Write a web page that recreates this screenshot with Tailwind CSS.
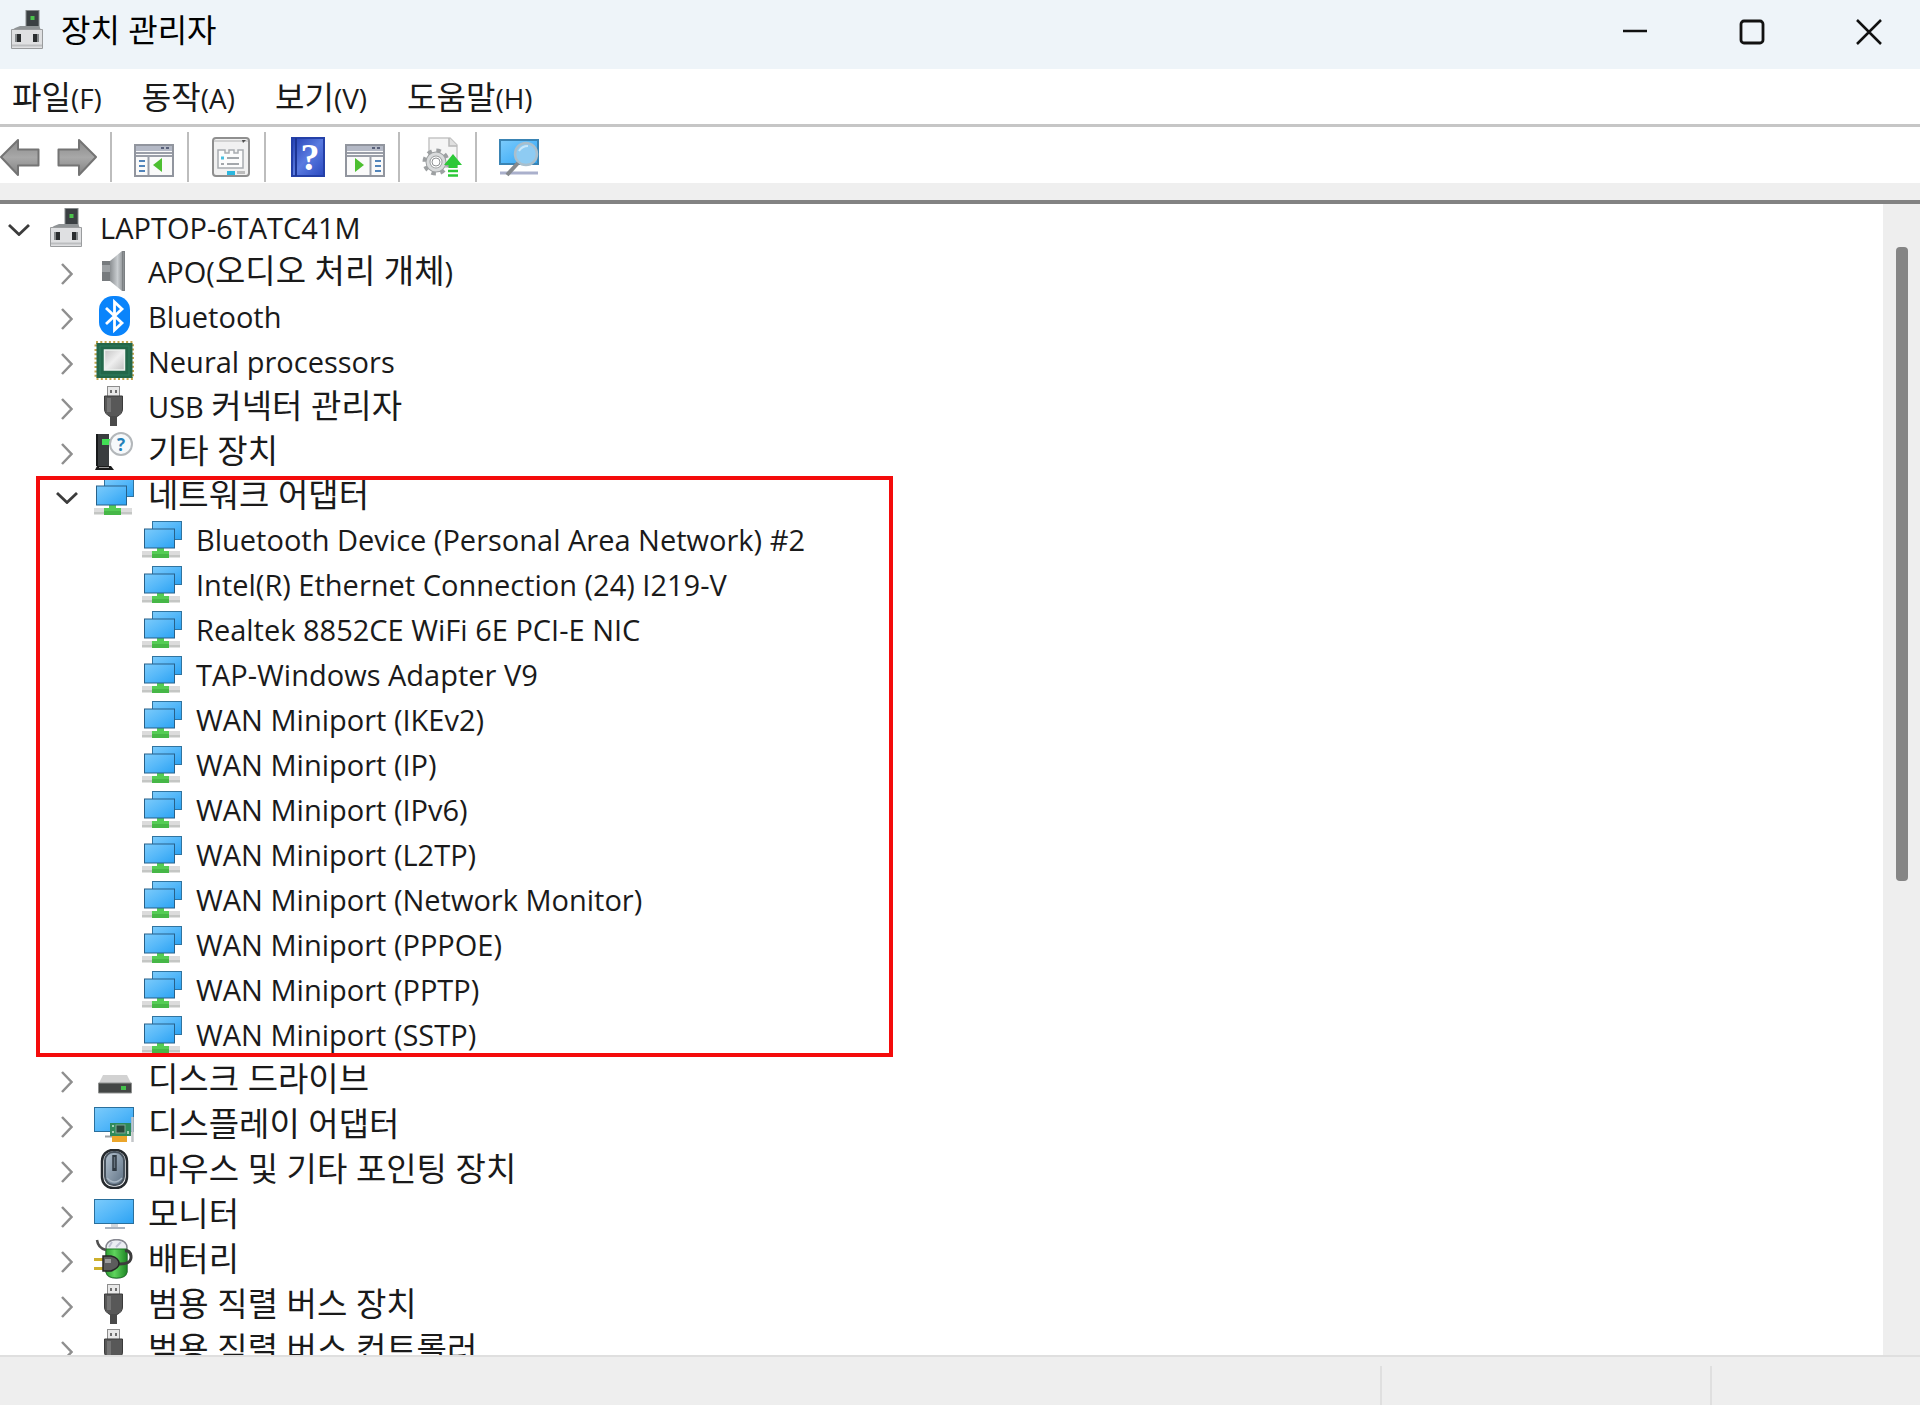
<!DOCTYPE html>
<html lang="ko">
<head>
  <meta charset="UTF-8">
  <meta name="viewport" content="width=device-width, initial-scale=1.0">
  <title>장치 관리자</title>
  <script src="https://cdn.jsdelivr.net/npm/@tailwindcss/browser@4"></script>
  <style>
    body { font-family: 'Open Sans', 'Noto Sans CJK KR', sans-serif; }
  </style>
</head>
<body class="h-screen flex flex-col overflow-hidden bg-white text-[#1a1a1a]">

  <!-- gradients stay in a rendered svg, they do not paint from a hidden one -->
  <svg class="absolute size-0" aria-hidden="true">
    <defs>
      <linearGradient id="screen" x1="0" y1="0" x2="1" y2="1">
        <stop offset="0" stop-color="#7ccbfb"/><stop offset=".5" stop-color="#55b8f9"/><stop offset="1" stop-color="#2ba2f3"/>
      </linearGradient>
      <linearGradient id="metal" x1="0" y1="0" x2="1" y2="0">
        <stop offset="0" stop-color="#8b8f92"/><stop offset=".5" stop-color="#c9cdd0"/><stop offset="1" stop-color="#7c8083"/>
      </linearGradient>
      <linearGradient id="silver" x1="0" y1="0" x2="1" y2="1">
        <stop offset="0" stop-color="#c4c4c4"/><stop offset=".5" stop-color="#efefef"/><stop offset="1" stop-color="#c2c2c2"/>
      </linearGradient>
      <linearGradient id="arrow" x1="0" y1="0" x2="0" y2="1">
        <stop offset="0" stop-color="#8a8a8a"/><stop offset=".5" stop-color="#a8a8a8"/><stop offset="1" stop-color="#828282"/>
      </linearGradient>
      <linearGradient id="book" x1="0" y1="0" x2="1" y2="1">
        <stop offset="0" stop-color="#2340b4"/><stop offset=".5" stop-color="#5a7be0"/><stop offset="1" stop-color="#2b49c0"/>
      </linearGradient>
      <linearGradient id="slate" x1="0" y1="0" x2="1" y2="1">
        <stop offset="0" stop-color="#b4c2cf"/><stop offset="1" stop-color="#5d7083"/>
      </linearGradient>
      <linearGradient id="green" x1="0" y1="0" x2="1" y2="0">
        <stop offset="0" stop-color="#2f9e33"/><stop offset=".4" stop-color="#5fd45c"/><stop offset="1" stop-color="#1f8726"/>
      </linearGradient>
    </defs>
  </svg>

  <!-- icon sprite -->
  <svg class="hidden" aria-hidden="true">
    <symbol id="i-computer" viewBox="0 0 40 40">
      <rect x="19" y="0.500" width="13" height="18" fill="#3b4043" stroke="#85898b"/>
      <rect x="23.500" y="6" width="4" height="4" fill="#4cc24c"/>
      <path d="M8 18 13 16H32L34 20H5Z" fill="#8f9395"/>
      <path d="M4.500 19.500H35.500V38.500H4.500Z" fill="#dfe0e2" stroke="#9a9c9e"/>
      <path d="M5 35.500H35" stroke="#bcbec0" stroke-width="2"/>
      <path d="M10 24H14V32H10ZM26 24H30V32H26Z" fill="#2a2d2f"/>
      <path d="M9 24V32M31 24V32" stroke="#85898b" stroke-width="2"/>
    </symbol>
    <symbol id="i-speaker" viewBox="0 0 40 40">
      <path d="M8 10H17V30H8Z" fill="#777b7e"/>
      <path d="M8 14H17V21H8Z" fill="#9da1a4"/>
      <path d="M16 10 28 0H31V40H28L16 30Z" fill="url(#metal)"/>
      <path d="M28.500 0.500H30.500V39.500H28.500Z" fill="#8d9194" stroke="#7c8083"/>
    </symbol>
    <symbol id="i-bluetooth" viewBox="0 0 40 40">
      <rect x="5" y="0" width="31" height="40" rx="14" fill="#0a84fb"/>
      <path d="M12 12 28 27 20.500 34V6L28 13 12 28" fill="none" stroke="#fff" stroke-width="2.800"/>
    </symbol>
    <symbol id="i-chip" viewBox="0 0 40 40">
      <rect x="2" y="1.500" width="37" height="36" fill="none" stroke="#c3a54e" stroke-width="3" stroke-dasharray="2 2.300"/>
      <rect x="2.500" y="2" width="36" height="35" fill="#23674a"/>
      <rect x="6" y="5" width="29" height="29" fill="none" stroke="#2f7d5c"/>
      <rect x="10.500" y="9" width="20" height="20" fill="url(#silver)" stroke="#eef2ef" stroke-width="1.500"/>
    </symbol>
    <symbol id="i-usb" viewBox="0 0 40 40">
      <rect x="13.500" y="0.500" width="12" height="10" fill="#e8e8e8" stroke="#8d8d8d"/>
      <path d="M16 4H18V7H16ZM21 4H23V7H21Z" fill="#6e6e6e"/>
      <path d="M10.500 10H28.500V23Q28.500 28 23 30.500H16Q10.500 28 10.500 23Z" fill="#585858" stroke="#3a3a3a"/>
      <path d="M13 12H17V26H13Z" fill="#747474"/>
      <path d="M16 30H23V40H16Z" fill="#4a4a4a"/>
    </symbol>
    <symbol id="i-other" viewBox="0 0 40 40">
      <path d="M2 3H15V35H2Z" fill="#3a3d3f"/>
      <path d="M2 3H4V35H2Z" fill="#17191a"/>
      <path d="M3 35H17L20 39H1Z" fill="#1b1b1b"/>
      <path d="M5 36.500H15" stroke="#9a9a9a"/>
      <rect x="8" y="8" width="8" height="6" fill="#42df55"/>
      <circle cx="27" cy="13" r="11" fill="#f6f9fb" stroke="#b3b7ba" stroke-width="2"/>
      <text x="27" y="19.500" text-anchor="middle" font-family="Open Sans" font-weight="700" font-size="17" fill="#2280b8">?</text>
    </symbol>
    <symbol id="i-network" viewBox="0 0 40 40">
      <rect x="10.500" y="2.500" width="29" height="18" fill="url(#screen)" stroke="#31749f"/>
      <rect x="0" y="32" width="38" height="6" fill="#dcdcdc"/>
      <path d="M0 36H38V38.500H0Z" fill="#c4c6c4"/>
      <path d="M15 29H22V32H27V39H10V32H15Z" fill="#55cc55"/>
      <path d="M10 35H27V39H10Z" fill="#46b747"/>
      <rect x="2.500" y="10" width="30" height="19" fill="url(#screen)" stroke="#286189"/>
    </symbol>
    <symbol id="i-disk" viewBox="0 0 40 40">
      <path d="M9 16H33L37.500 25H4.500Z" fill="#d2d2d2"/>
      <path d="M4.500 24H37.500V34H4.500Z" fill="#434645" stroke="#8f9190"/>
      <path d="M5 34.500H37" stroke="#c9c9c9"/>
      <rect x="27" y="27" width="5" height="4" fill="#43c04b"/>
    </symbol>
    <symbol id="i-display" viewBox="0 0 40 40">
      <rect x="0.500" y="3.500" width="39" height="24" fill="url(#screen)" stroke="#2a6f9c"/>
      <path d="M11 32.500H18" stroke="#9aa0a5" stroke-width="2"/>
      <rect x="18" y="31" width="15" height="7" fill="#eba52a"/>
      <rect x="16" y="19" width="21" height="13" fill="#2f8a5b"/>
      <rect x="22" y="21" width="9" height="8" fill="#2b4a3d" stroke="#7ea693"/>
      <path d="M18 21H20V23H18ZM33 27H35V30H33ZM18 27H20V29H18Z" fill="#a5cfb5"/>
      <path d="M38.500 13V38" stroke="#c3c6c9" stroke-width="2.500"/>
    </symbol>
    <symbol id="i-mouse" viewBox="0 0 40 40">
      <rect x="8" y="1" width="25" height="38" rx="11" fill="#f1f3f5" stroke="#25292d" stroke-width="2.500"/>
      <rect x="11" y="3" width="19" height="33" rx="8.500" fill="url(#slate)" stroke="#48535e" stroke-width="2"/>
      <path d="M20.500 6V22" stroke="#2f3942" stroke-width="4.500"/>
      <path d="M20.500 8V19" stroke="#66737f" stroke-width="1.500"/>
      <path d="M13 29Q20.500 37 28 29" stroke="#a9b7c3" stroke-width="1.500" fill="none"/>
    </symbol>
    <symbol id="i-monitor" viewBox="0 0 40 40">
      <rect x="0.500" y="5.500" width="39" height="24" fill="url(#screen)" stroke="#2a6f9c"/>
      <path d="M17 30H24V33H17Z" fill="#d2d7dc"/>
      <path d="M11 34H31" stroke="#a9b3bf" stroke-width="2"/>
    </symbol>
    <symbol id="i-battery" viewBox="0 0 40 40">
      <path d="M12 9Q12 1 22.500 0.500Q33 1 33 9V33Q32 39 22.500 39Q13 39 12 33Z" fill="#eceef3" stroke="#85868f" stroke-width="1.500"/>
      <path d="M12 10H33V33Q32 39 22.500 39Q13 39 12 33Z" fill="url(#green)" stroke="#1d7a25"/>
      <path d="M15 8 18 3M22 8 27 3" stroke="#bfc1d2" stroke-width="2"/>
      <path d="M3 1Q4 9 12 11" fill="none" stroke="#4f4f4f" stroke-width="2.500"/>
      <path d="M23 25Q38 26 37 17Q36 11 31 12" fill="none" stroke="#3c3c3c" stroke-width="3"/>
      <path d="M0 20.500H9M0 29.500H9" stroke="#cdb02d" stroke-width="3"/>
      <path d="M9 17H17Q25 19 25 24.500Q25 29 17 32H9Z" fill="#5c5c5c" stroke="#262626" stroke-width="1.500"/>
      <path d="M11 20H17V24H11Z" fill="#9c9c9c"/>
    </symbol>

    <symbol id="t-back" viewBox="0 0 40 40">
      <path d="M1 20 18 3V12.500H38.500V28.500H18V38Z" fill="url(#arrow)" stroke="#747474" stroke-width="2" stroke-linejoin="round"/>
    </symbol>
    <symbol id="t-forward" viewBox="0 0 40 40">
      <path d="M39 20 22 3V12.500H1.500V28.500H22V38Z" fill="url(#arrow)" stroke="#747474" stroke-width="2" stroke-linejoin="round"/>
    </symbol>
    <symbol id="t-tree" viewBox="0 0 40 40">
      <rect x="1" y="8" width="38" height="31" fill="#fafafa" stroke="#91959e" stroke-width="2"/>
      <rect x="2" y="9" width="36" height="5" fill="#b4b9c6"/>
      <path d="M27 11H30M32 11H35" stroke="#59617a" stroke-width="2"/>
      <path d="M2 16H38M2 19H38M14.500 19V38" stroke="#9a9ea8" stroke-width="2"/>
      <path d="M5 24H11M5 29H11M5 34H11" stroke="#5285bb" stroke-width="2"/>
      <path d="M28 21V35L19 28Z" fill="#4cbf30"/>
    </symbol>
    <symbol id="t-props" viewBox="0 0 40 40">
      <rect x="2" y="1" width="36" height="38" rx="3" fill="#f1f1f1" stroke="#8f8f8f" stroke-width="2"/>
      <path d="M3 4H37" stroke="#d2d2d2" stroke-width="2"/>
      <path d="M31 3H35L32 6Z" fill="#505050"/>
      <path d="M7 13H14V16H18V13H23V16H27V13H32V31H7Z" fill="#fcfcfc" stroke="#a8acb0" stroke-width="1.500"/>
      <path d="M16 21H28M16 27H28" stroke="#a3a7ab" stroke-width="2"/>
      <path d="M10 21H13" stroke="#47bfe0" stroke-width="3"/>
      <path d="M10 27H13" stroke="#a3a7ab" stroke-width="2"/>
      <rect x="16" y="34" width="8" height="4" fill="#2cb7df"/>
      <rect x="26" y="34" width="8" height="3" fill="#bcbcbc"/>
    </symbol>
    <symbol id="t-help" viewBox="0 0 40 40">
      <rect x="4" y="1" width="32" height="38" fill="url(#book)" stroke="#2440a8" stroke-width="2"/>
      <path d="M8 1V39" stroke="#1c3594" stroke-width="2"/>
      <text x="22" y="33" text-anchor="middle" font-family="Liberation Serif" font-weight="700" font-size="38" fill="#fff">?</text>
    </symbol>
    <symbol id="t-action" viewBox="0 0 40 40">
      <rect x="1" y="8" width="38" height="31" fill="#fafafa" stroke="#91959e" stroke-width="2"/>
      <rect x="2" y="9" width="36" height="5" fill="#b4b9c6"/>
      <path d="M27 11H30M32 11H35" stroke="#59617a" stroke-width="2"/>
      <path d="M2 16H38M2 19H38M25.500 19V38" stroke="#9a9ea8" stroke-width="2"/>
      <path d="M30 24H36M30 29H36M30 34H36" stroke="#5285bb" stroke-width="2"/>
      <path d="M10 21V35L19 28Z" fill="#4cbf30"/>
    </symbol>
    <symbol id="t-update" viewBox="0 0 40 40">
      <path d="M7 1H28L35 8V30H7Z" fill="#f5f5f5" stroke="#c5c5c5" stroke-width="1.500"/>
      <path d="M27 1V9H35" fill="#e0e0e0" stroke="#b7b7b7" stroke-width="1.500"/>
      <circle cx="14" cy="25" r="11.500" fill="none" stroke="#9da0a2" stroke-width="4" stroke-dasharray="4.500 4.530"/>
      <circle cx="14" cy="25" r="8" fill="#fff" stroke="#9da0a2" stroke-width="5"/>
      <circle cx="14" cy="25" r="8" fill="none" stroke="#d9dbdc" stroke-width="3"/>
      <circle cx="14" cy="25" r="4" fill="#fff" stroke="#8f9294"/>
      <path d="M31 17 40 28H35.500V31H26.500V28H22Z" fill="#2cc937"/>
      <path d="M26 34H36M26 38.500H36" stroke="#2cc937" stroke-width="2.500"/>
    </symbol>
    <symbol id="t-scan" viewBox="0 0 40 40">
      <rect x="1" y="3" width="38" height="24" fill="url(#screen)" stroke="#3a84b4" stroke-width="2"/>
      <path d="M1 36H39" stroke="#aab0cc" stroke-width="3"/>
      <circle cx="27" cy="17" r="11" fill="#8ecbf2" stroke="#a9bfcd" stroke-width="2.500"/>
      <path d="M20 14Q23 9 29 9" fill="none" stroke="#c8e8fb" stroke-width="2"/>
      <path d="M19 26 8 38" stroke="#85898d" stroke-width="4"/>
    </symbol>
  </svg>

  <header class="h-[69px] shrink-0 flex items-start justify-between bg-[#eef4f9] pl-[7px] pr-[25px]">
    <div class="flex items-start gap-3.5 pt-2.5">
      <svg class="size-10"><use href="#i-computer"/></svg>
      <h1 class="text-[32px] leading-10 text-black">장치 관리자</h1>
    </div>
    <div class="flex gap-[65px] pt-1.5">
      <button aria-label="최소화" class="w-13 h-13 flex items-center justify-center">
        <svg class="size-[26px]" viewBox="0 0 26 26" fill="none" stroke="#111" stroke-width="2.500"><path d="M1 12H25"/></svg>
      </button>
      <button aria-label="최대화" class="w-13 h-13 flex items-center justify-center">
        <svg class="size-[26px]" viewBox="0 0 26 26" fill="none" stroke="#111" stroke-width="2.800"><rect x="2" y="2" width="22" height="22" rx="3"/></svg>
      </button>
      <button aria-label="닫기" class="w-13 h-13 flex items-center justify-center">
        <svg class="size-[26px]" viewBox="0 0 26 26" fill="none" stroke="#111" stroke-width="2.500"><path d="M1 1 25 25M25 1 1 25"/></svg>
      </button>
    </div>
  </header>

  <nav class="h-[58px] shrink-0 flex items-center gap-10 border-b-3 border-[#c6c6c6] pl-3 pt-0.5 text-[28px] leading-10">
    <button><span class="text-[32px] leading-none">파일</span>(F)</button>
    <button><span class="text-[32px] leading-none">동작</span>(A)</button>
    <button><span class="text-[32px] leading-none">보기</span>(V)</button>
    <button><span class="text-[32px] leading-none">도움말</span>(H)</button>
  </nav>

  <div class="h-14 shrink-0 flex items-center pt-1" role="toolbar">
    <button aria-label="뒤로"><svg class="size-10"><use href="#t-back"/></svg></button>
    <button aria-label="앞으로" class="ml-[17px]"><svg class="size-10"><use href="#t-forward"/></svg></button>
    <span class="w-0.5 h-[50px] ml-[13px] mr-[22px] bg-[#bdbdbd]"></span>
    <button aria-label="콘솔 트리 표시"><svg class="size-10"><use href="#t-tree"/></svg></button>
    <span class="w-0.5 h-[50px] ml-[13px] mr-[22px] bg-[#bdbdbd]"></span>
    <button aria-label="속성"><svg class="size-10"><use href="#t-props"/></svg></button>
    <span class="w-0.5 h-[50px] ml-[13px] mr-[22px] bg-[#bdbdbd]"></span>
    <button aria-label="도움말"><svg class="size-10"><use href="#t-help"/></svg></button>
    <button aria-label="작업 창 표시" class="ml-[17px]"><svg class="size-10"><use href="#t-action"/></svg></button>
    <span class="w-0.5 h-[50px] ml-[13px] mr-[22px] bg-[#bdbdbd]"></span>
    <button aria-label="드라이버 업데이트"><svg class="size-10"><use href="#t-update"/></svg></button>
    <span class="w-0.5 h-[50px] ml-[13px] mr-[22px] bg-[#bdbdbd]"></span>
    <button aria-label="하드웨어 변경 사항 검색"><svg class="size-10"><use href="#t-scan"/></svg></button>
  </div>
  <div class="h-[21px] shrink-0 bg-[#efefef] border-b-4 border-[#828282]"></div>

  <main class="flex-1 min-h-0 flex">
    <ul id="tree" role="tree" class="flex-1 overflow-hidden pt-1"></ul>
    <div class="w-[37px] bg-[#eeeeee] flex flex-col items-center pt-[43px]">
      <div class="w-3 h-[634px] rounded-sm bg-[#858585]"></div>
    </div>
  </main>

  <footer class="h-[50px] shrink-0 flex justify-end bg-[#eeeeee] border-t-2 border-[#dfdfdf] pt-[9px]">
    <div class="w-[330px] border-l-2 border-[#dfdfdf]"></div>
    <div class="w-[210px] border-l-2 border-[#dfdfdf]"></div>
  </footer>

  <script>
    const devices = {
      icon: "computer", name: "LAPTOP-6TATC41M", children: [
        { icon: "speaker", name: "APO(오디오 처리 개체)" },
        { icon: "bluetooth", name: "Bluetooth" },
        { icon: "chip", name: "Neural processors" },
        { icon: "usb", name: "USB 커넥터 관리자" },
        { icon: "other", name: "기타 장치" },
        { icon: "network", name: "네트워크 어댑터", marked: true, children: [
          "Bluetooth Device (Personal Area Network) #2",
          "Intel(R) Ethernet Connection (24) I219-V",
          "Realtek 8852CE WiFi 6E PCI-E NIC",
          "TAP-Windows Adapter V9",
          "WAN Miniport (IKEv2)",
          "WAN Miniport (IP)",
          "WAN Miniport (IPv6)",
          "WAN Miniport (L2TP)",
          "WAN Miniport (Network Monitor)",
          "WAN Miniport (PPPOE)",
          "WAN Miniport (PPTP)",
          "WAN Miniport (SSTP)"
        ].map(name => ({ icon: "network", name, leaf: true })) },
        { icon: "disk", name: "디스크 드라이브" },
        { icon: "display", name: "디스플레이 어댑터" },
        { icon: "mouse", name: "마우스 및 기타 포인팅 장치" },
        { icon: "monitor", name: "모니터" },
        { icon: "battery", name: "배터리" },
        { icon: "usb", name: "범용 직렬 버스 장치" },
        { icon: "usb", name: "범용 직렬 버스 컨트롤러" }
      ]
    };

    const openArrow = `<button aria-label="접기"><svg class="w-[22px] h-3" viewBox="0 0 22 12" fill="none" stroke="#3c3c3c" stroke-width="2.800"><path d="M1 1 11 10.500 21 1"/></svg></button>`;
    const closedArrow = `<button aria-label="펼치기"><svg class="w-3 h-[22px]" viewBox="0 0 12 22" fill="none" stroke="#8f8f8f" stroke-width="2.500"><path d="M1 1 10.500 11 1 21"/></svg></button>`;

    // Hangul is set a little larger than Latin
    function label(name) {
      return name.replace(/[가-힣]+( [가-힣]+)*/g, m => `<span class="text-[33px] leading-none">${m}</span>`);
    }

    function renderNode(node) {
      const arrow = node.leaf ? "" : node.children ? openArrow : closedArrow;
      return `
        <li role="treeitem" class="relative">
          <div class="${node.children ? "h-[43px]" : "h-[45px]"} flex items-center">
            <span class="w-[38px] mr-2 flex justify-center">${arrow}</span>
            <svg class="size-10 self-start"><use href="#i-${node.icon}"/></svg>
            <span class="ml-3.5 pb-1 text-[29px] leading-10 whitespace-nowrap">${label(node.name)}</span>
          </div>
          ${node.children ? `<ul role="group" class="pl-12">${node.children.map(renderNode).join("")}</ul>` : ""}
          ${node.marked ? `<div class="absolute top-0 bottom-0.5 -left-3 w-[857px] border-4 border-[#f40b0b] pointer-events-none"></div>` : ""}
        </li>`;
    }

    document.getElementById("tree").innerHTML = renderNode(devices);
  </script>
</body>
</html>
